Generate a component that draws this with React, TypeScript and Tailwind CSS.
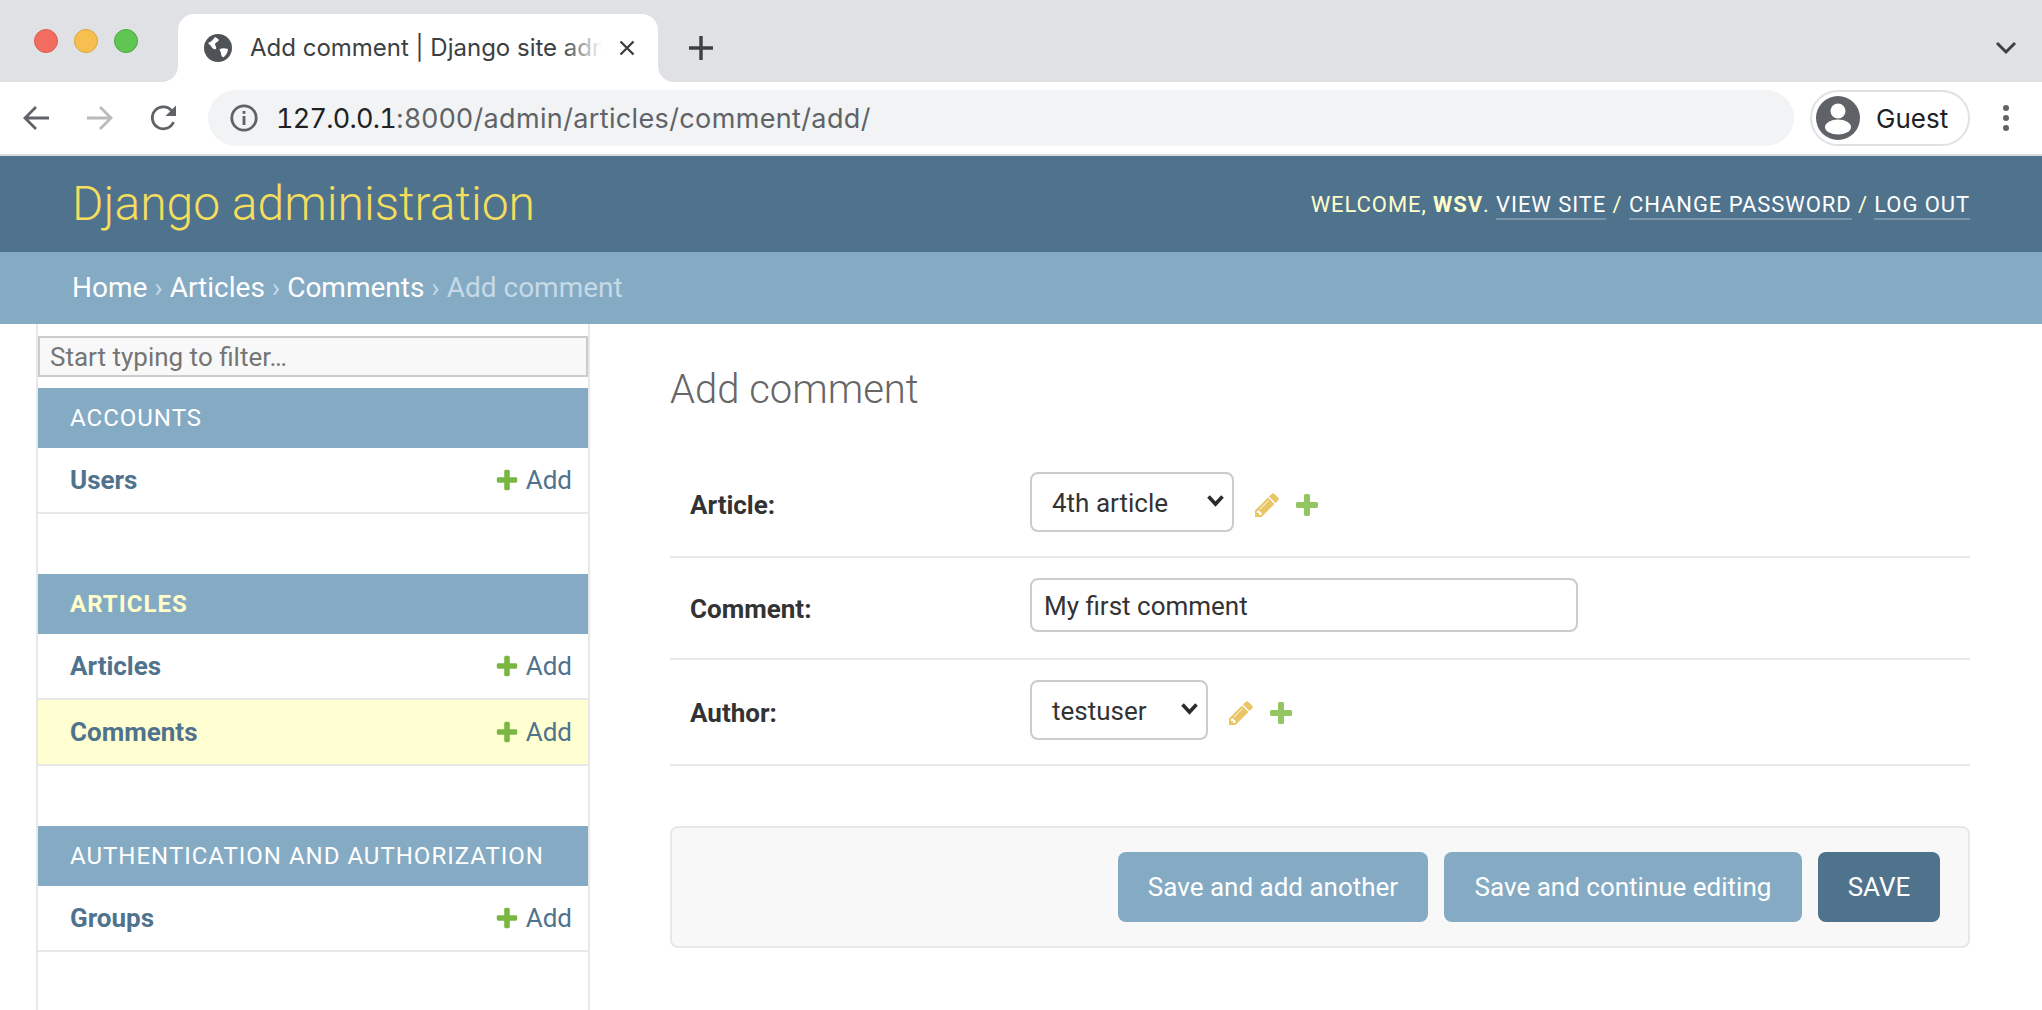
import React from "react";

const roboto = "font-['Roboto',sans-serif]";
const PLUS = "M1600 796v192q0 40-28 68t-68 28h-416v416q0 40-28 68t-68 28h-192q-40 0-68-28t-28-68v-416h-416q-40 0-68-28t-28-68v-192q0-40 28-68t68-28h416v-416q0-40 28-68t68-28h192q40 0 68 28t28 68v416h416q40 0 68 28t28 68z";
const PENCIL = "M491 1536l91-91-235-235-91 91v107h128v128h107zm523-928q0-22-22-22-10 0-17 7l-542 542q-7 7-7 17 0 22 22 22 10 0 17-7l542-542q7-7 7-17zm-54-192l416 416-832 832h-416v-416zm683 96q0 53-37 90l-166 166-416-416 166-165q36-38 90-38 53 0 91 38l235 234q37 39 37 91z";

function Plus({ size, color }: { size: number; color: string }) {
  return (
    <svg width={size} height={size} viewBox="0 0 1792 1792" className="shrink-0">
      <path d={PLUS} fill={color} />
    </svg>
  );
}

function Pencil() {
  return (
    <svg width={28} height={28} viewBox="0 0 1792 1792" className="shrink-0">
      <path d={PENCIL} fill="#eac565" />
    </svg>
  );
}

function Chevron() {
  return (
    <svg width="20" height="14" viewBox="0 0 20 14" className="pointer-events-none absolute right-[8px] top-[22px]">
      <path d="M2.5 2.5 L9.5 10 L16.5 2.5" fill="none" stroke="#2b2b2b" strokeWidth="3.6" />
    </svg>
  );
}

function Flare({ side }: { side: "left" | "right" }) {
  return (
    <svg
      width="16"
      height="16"
      viewBox="0 0 16 16"
      className={side === "left" ? "absolute bottom-0 left-[-16px]" : "absolute bottom-0 right-[-16px]"}
    >
      <path d={side === "left" ? "M16 0 A16 16 0 0 1 0 16 L16 16 Z" : "M0 0 A16 16 0 0 0 16 16 L0 16 Z"} fill="#ffffff" />
    </svg>
  );
}

function ChromeBar() {
  return (
    <div className="font-['Inter',sans-serif]">
      <div className="flex h-[82px] items-end bg-[#dfe1e5]">
        <div className="flex h-full w-[178px] shrink-0 items-start gap-4 pl-[34px] pt-[29px]">
          <span className="h-6 w-6 rounded-full border border-[#dd5a50] bg-[#f26d60]" />
          <span className="h-6 w-6 rounded-full border border-[#dba63c] bg-[#f6bf4f]" />
          <span className="h-6 w-6 rounded-full border border-[#4ba83d] bg-[#61c554]" />
        </div>
        <div className="relative flex h-[68px] w-[480px] shrink-0 items-center rounded-t-[16px] bg-white pl-[26px]">
          <Flare side="left" />
          <Flare side="right" />
          <svg width="28" height="28" viewBox="0 0 28 28" className="shrink-0">
            <circle cx="14" cy="14" r="14" fill="#4f5257" />
            <path d="M4 9c3-1 5-3 7-6 2 1 3 2 4 3-1 2-3 2-4 4 0 2 2 3 1 5-2 1-4-1-5-3-1-1-2-2-3-3zM16 15c2-1 5-1 8 0 0 3-2 6-4 8-2 1-3-2-3-4 0-1-2-3-1-4z" fill="#ffffff" />
          </svg>
          <div className="relative ml-[18px] w-[352px] overflow-hidden whitespace-nowrap text-[24px] leading-[32px] text-[#3c4043]">
            Add comment | Django site admin
            <span className="absolute right-0 top-0 h-full w-[40px] bg-gradient-to-r from-transparent to-white" />
          </div>
          <svg width="18" height="18" viewBox="0 0 18 18" className="absolute left-[440px] top-[25px]">
            <path d="M2.5 2.5 L15.5 15.5 M15.5 2.5 L2.5 15.5" stroke="#3c4043" strokeWidth="2.4" />
          </svg>
        </div>
        <div className="flex h-[68px] flex-1 items-center">
          <svg width="28" height="28" viewBox="0 0 28 28" className="ml-[29px]">
            <path d="M14 2 V26 M2 14 H26" stroke="#3c4043" strokeWidth="3.4" />
          </svg>
          <svg width="24" height="16" viewBox="0 0 24 16" className="ml-auto mr-[24px]">
            <path d="M3 3 L12 12 L21 3" fill="none" stroke="#3c4043" strokeWidth="3" />
          </svg>
        </div>
      </div>
      <div className="flex h-[72px] items-center bg-white">
        <div className="flex w-[208px] shrink-0 items-center justify-between pl-[22px] pr-[30px]">
          <svg width="28" height="28" viewBox="0 0 28 28">
            <path d="M27 14 H3 M14 3 L3 14 L14 25" fill="none" stroke="#5f6368" strokeWidth="2.8" />
          </svg>
          <svg width="28" height="28" viewBox="0 0 28 28">
            <path d="M1 14 H25 M14 3 L25 14 L14 25" fill="none" stroke="#b8babc" strokeWidth="2.8" />
          </svg>
          <svg width="28" height="28" viewBox="0 0 28 28">
            <path d="M23.5 18a11 11 0 1 1 -1.5-11" fill="none" stroke="#5f6368" strokeWidth="2.8" />
            <path d="M26 1.5 V12 H15.5 Z" fill="#5f6368" />
          </svg>
        </div>
        <div className="flex h-14 w-[1586px] shrink-0 items-center rounded-full bg-[#f1f3f4] pl-[22px] text-[27px]">
          <svg width="28" height="28" viewBox="0 0 28 28" className="shrink-0">
            <circle cx="14" cy="14" r="12.2" fill="none" stroke="#5f6368" strokeWidth="2.8" />
            <rect x="12.6" y="12" width="2.8" height="9" fill="#5f6368" />
            <rect x="12.6" y="7" width="2.8" height="2.8" fill="#5f6368" />
          </svg>
          <span className="ml-[18px] translate-y-px tracking-[-0.75px] text-[#202124] tabular-nums">127.0.0.1</span>
          <span className="translate-y-px tracking-[0.36px] text-[#5f6368]">:8000/admin/articles/comment/add/</span>
        </div>
        <div className="ml-4 flex h-14 w-[160px] shrink-0 items-center rounded-full border-2 border-[#dfe1e5] pl-[4px]">
          <svg width="44" height="44" viewBox="0 0 44 44" className="shrink-0">
            <circle cx="22" cy="22" r="22" fill="#5f6368" />
            <circle cx="22" cy="15" r="7.5" fill="#ffffff" />
            <ellipse cx="22" cy="31" rx="13" ry="7.5" fill="#ffffff" />
          </svg>
          <span className="ml-4 text-[26px] text-[#202124]">Guest</span>
        </div>
        <div className="ml-[33px] flex flex-col gap-1">
          <span className="h-[6px] w-[6px] rounded-full bg-[#5f6368]" />
          <span className="h-[6px] w-[6px] rounded-full bg-[#5f6368]" />
          <span className="h-[6px] w-[6px] rounded-full bg-[#5f6368]" />
        </div>
      </div>
      <div className="h-[2px] bg-[#dadce0]" />
    </div>
  );
}

function TopLink({ children }: { children: React.ReactNode }) {
  return <a className="border-b-2 border-white/25 pb-[1px] text-white">{children}</a>;
}

function AdminHeader() {
  return (
    <>
      <div className="flex h-24 items-center justify-between bg-[#4f738d] pl-[72px] pr-[72px]">
        <h1 className="text-[48px] font-light leading-[56px] text-[#f5dd5d]">Django administration</h1>
        <div className="translate-y-px text-[22px] font-normal uppercase leading-[30px] tracking-[0.92px] text-[#ffffcc]">
          Welcome, <strong className="font-bold">wsv</strong>. <TopLink>View site</TopLink> / <TopLink>Change password</TopLink> / <TopLink>Log out</TopLink>
        </div>
      </div>
      <div className="flex h-[72px] items-center bg-[#85abc4] pl-[72px] text-[28px] text-[#c5d9e6]">
        <a className="text-white">Home</a>&nbsp;›&nbsp;<a className="text-white">Articles</a>&nbsp;›&nbsp;<a className="text-white">Comments</a>&nbsp;›&nbsp;Add comment
      </div>
    </>
  );
}

function ModelRow({ name, active }: { name: string; active?: boolean }) {
  return (
    <div className={`flex h-[66px] items-center justify-between border-b-2 border-[#e8e8e8] pl-8 pr-4 text-[26px] text-[#4f738d] ${active ? "bg-[#ffffd2]" : "bg-white"}`}>
      <a className="font-bold">{name}</a>
      <span className="flex items-center gap-[6px]">
        <Plus size={26} color="#7ab742" />
        <a>Add</a>
      </span>
    </div>
  );
}

function Module({ title, active, rows }: { title: string; active?: boolean; rows: { name: string; active?: boolean }[] }) {
  return (
    <section className="mb-[60px]">
      <h2 className={`flex h-[60px] items-center bg-[#85abc4] pl-8 text-[24px] tracking-[1px] ${active ? "font-bold text-[#ffffcc]" : "font-normal text-white"}`}>{title}</h2>
      {rows.map((r) => (
        <ModelRow key={r.name} name={r.name} active={r.active} />
      ))}
    </section>
  );
}

function Sidebar() {
  return (
    <aside className="ml-9 w-[554px] shrink-0 border-x-2 border-[#e8e8e8] pt-3">
      <input
        readOnly
        placeholder="Start typing to filter…"
        className="mb-[11px] block h-[41px] w-full border-2 border-[#cccccc] bg-[#f8f8f8] px-[10px] text-[26px] text-[#333] outline-none placeholder:text-[#757575]"
      />
      <Module title="ACCOUNTS" rows={[{ name: "Users" }]} />
      <Module title="ARTICLES" active rows={[{ name: "Articles" }, { name: "Comments", active: true }]} />
      <Module title="AUTHENTICATION AND AUTHORIZATION" rows={[{ name: "Groups" }]} />
    </aside>
  );
}

function SelectField({ value, width }: { value: string; width: number }) {
  return (
    <div className="relative" style={{ width }}>
      <select
        defaultValue={value}
        className="block h-[60px] w-full appearance-none rounded-lg border-2 border-[#cccccc] bg-white pl-5 pt-[2px] text-[26px] text-[#333] outline-none"
      >
        <option>{value}</option>
      </select>
      <Chevron />
    </div>
  );
}

function FieldRow({ label, h, children }: { label: string; h: string; children: React.ReactNode }) {
  return (
    <div className={`flex items-start border-b-2 border-[#e8e8e8] ${h}`}>
      <label className="flex h-full w-[360px] shrink-0 items-center pl-5 pt-[3px] text-[26px] font-bold text-[#333]">{label}</label>
      <div className="pt-5">{children}</div>
    </div>
  );
}

function RelatedIcons() {
  return (
    <div className="mt-[6px] flex items-center gap-3">
      <Pencil />
      <Plus size={28} color="#93c663" />
    </div>
  );
}

function Main() {
  return (
    <main className="ml-20 flex-1 pr-[72px] pt-[42px]">
      <h1 className="mb-[38px] text-[40px] font-light leading-[48px] text-[#666]">Add comment</h1>
      <FieldRow label="Article:" h="h-[106px]">
        <div className="flex items-center gap-[19px]">
          <SelectField value="4th article" width={204} />
          <RelatedIcons />
        </div>
      </FieldRow>
      <FieldRow label="Comment:" h="h-[102px]">
        <input
          readOnly
          value="My first comment"
          className="block h-[54px] w-[548px] rounded-lg border-2 border-[#cccccc] bg-white px-[12px] pt-[2px] text-[26px] text-[#333] outline-none"
        />
      </FieldRow>
      <FieldRow label="Author:" h="h-[106px]">
        <div className="flex items-center gap-[19px]">
          <SelectField value="testuser" width={178} />
          <RelatedIcons />
        </div>
      </FieldRow>
      <div className="mt-[60px] flex h-[122px] items-center justify-end gap-4 rounded-lg border-2 border-[#e8e8e8] bg-[#f8f8f8] pr-7">
        <button className="h-[70px] w-[310px] rounded-lg bg-[#85abc4] text-[26px] text-white">Save and add another</button>
        <button className="h-[70px] w-[358px] rounded-lg bg-[#85abc4] text-[26px] text-white">Save and continue editing</button>
        <button className="h-[70px] w-[122px] rounded-lg bg-[#4f738d] text-[26px] text-white">SAVE</button>
      </div>
    </main>
  );
}

export default function App() {
  return (
    <div className={`flex h-[1010px] w-[2042px] flex-col overflow-hidden bg-white ${roboto}`}>
      <ChromeBar />
      <AdminHeader />
      <div className="flex min-h-0 flex-1">
        <Sidebar />
        <Main />
      </div>
    </div>
  );
}
